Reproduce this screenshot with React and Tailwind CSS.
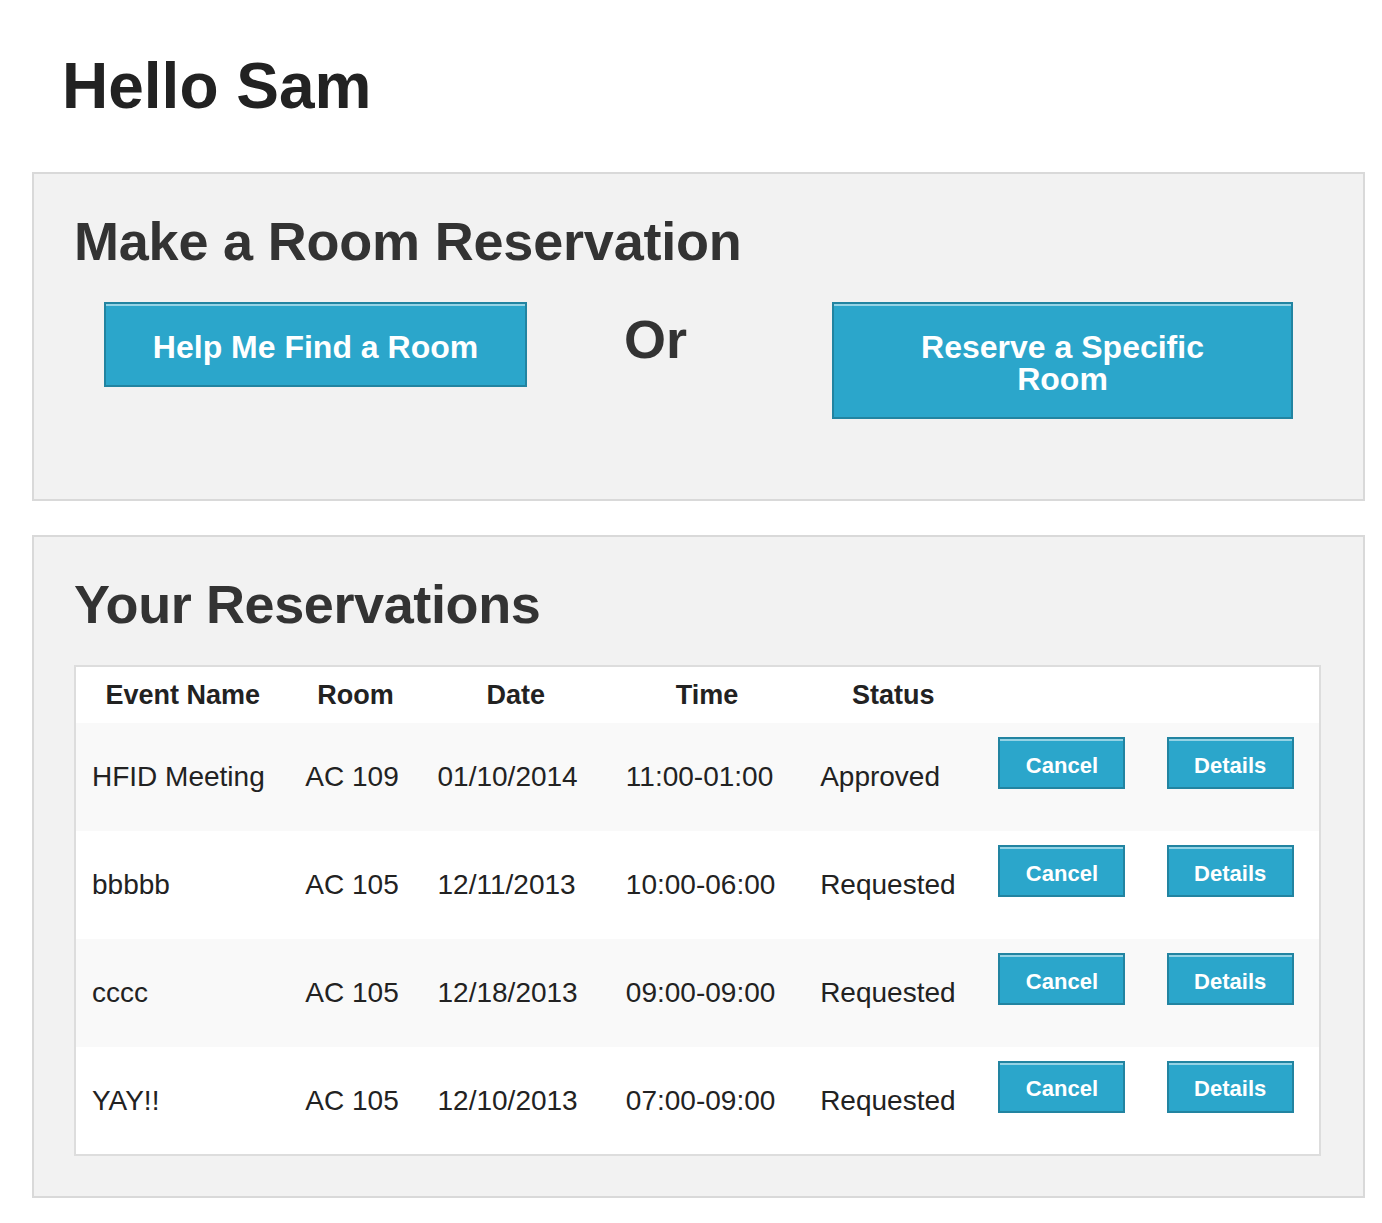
import React from "react";

const rows = [
  { name: "HFID Meeting", room: "AC 109", date: "01/10/2014", time: "11:00-01:00", status: "Approved" },
  { name: "bbbbb", room: "AC 105", date: "12/11/2013", time: "10:00-06:00", status: "Requested" },
  { name: "cccc", room: "AC 105", date: "12/18/2013", time: "09:00-09:00", status: "Requested" },
  { name: "YAY!!", room: "AC 105", date: "12/10/2013", time: "07:00-09:00", status: "Requested" },
];

function SmallButton({ children }) {
  return (
    <button className="flex items-center justify-center w-[127px] h-[52px] mb-[28px] pt-[5px] bg-[#2ba6cb] border-2 border-[#2284a1] shadow-[inset_0_2px_0_rgba(255,255,255,0.5)] text-white font-bold text-[22px] leading-[22px]">
      {children}
    </button>
  );
}

export default function App() {
  return (
    <div className="bg-white min-h-[1223px] text-[#222222] font-['Liberation_Sans',Arial,sans-serif]">
      <h1 className="pt-[54px] pl-[62px] text-[64px] leading-[64px] font-bold text-[#222222]">Hello Sam</h1>

      <div className="mt-[54px] ml-[32px] w-[1333px] bg-[#f2f2f2] border-2 border-[#d9d9d9] px-[40px] pt-[40px] pb-[40px]">
        <h2 className="text-[54px] leading-[54px] font-bold text-[#333333] tracking-[-0.2px]">Make a Room Reservation</h2>
        <div className="mt-[34px] flex items-start">
          <button className="ml-[30px] flex items-center justify-center w-[423px] h-[85px] pt-[4px] mb-[40px] bg-[#2ba6cb] border-2 border-[#2284a1] shadow-[inset_0_2px_0_rgba(255,255,255,0.5)] text-white font-bold text-[32px] leading-[32px]">
            Help Me Find a Room
          </button>
          <div className="ml-[97px] mt-[10px] text-[54px] leading-[54px] font-bold text-[#333333]">Or</div>
          <button className="ml-[145px] flex flex-col items-center justify-center w-[461px] h-[117px] pt-[4px] mb-[40px] bg-[#2ba6cb] border-2 border-[#2284a1] shadow-[inset_0_2px_0_rgba(255,255,255,0.5)] text-white font-bold text-[32px] leading-[32px] text-center">
            <span className="block">Reserve a Specific</span>
            <span className="block">Room</span>
          </button>
        </div>
      </div>

      <div className="mt-[34px] ml-[32px] w-[1333px] bg-[#f2f2f2] border-2 border-[#d9d9d9] px-[40px] pt-[40px] pb-[40px]">
        <h2 className="text-[54px] leading-[54px] font-bold text-[#333333] tracking-[-0.4px]">Your Reservations</h2>
        <table className="mt-[34px] w-[1247px] table-fixed border-collapse border-2 border-[#dddddd] bg-white">
          <colgroup>
            <col className="w-[214px]" />
            <col className="w-[132px]" />
            <col className="w-[188px]" />
            <col className="w-[194px]" />
            <col className="w-[178px]" />
            <col className="w-[168px]" />
            <col className="w-[169px]" />
          </colgroup>
          <thead>
            <tr className="h-[56px] bg-white">
              {["Event Name", "Room", "Date", "Time", "Status", "", ""].map((h, i) => (
                <th key={i} className="px-[16px] text-center align-middle text-[27px] leading-[56px] font-bold text-[#222222] whitespace-nowrap">
                  {h}
                </th>
              ))}
            </tr>
          </thead>
          <tbody>
            {rows.map((r, i) => (
              <tr key={i} className={`h-[108px] ${i % 2 === 0 ? "bg-[#f9f9f9]" : "bg-white"}`}>
                <td className="pl-[16px] pr-0 align-middle text-[28px] leading-[28px] text-[#222222] whitespace-nowrap">{r.name}</td>
                <td className="pl-[16px] pr-0 align-middle text-[28px] leading-[28px] text-[#222222] whitespace-nowrap">{r.room}</td>
                <td className="pl-[16px] pr-0 align-middle text-[28px] leading-[28px] text-[#222222] whitespace-nowrap">{r.date}</td>
                <td className="pl-[16px] pr-0 align-middle text-[28px] leading-[28px] text-[#222222] whitespace-nowrap">{r.time}</td>
                <td className="pl-[16px] pr-0 align-middle text-[28px] leading-[28px] text-[#222222] whitespace-nowrap">{r.status}</td>
                <td className="pl-[16px] pr-0 align-middle">
                  <SmallButton>Cancel</SmallButton>
                </td>
                <td className="pl-[16px] pr-0 align-middle">
                  <SmallButton>Details</SmallButton>
                </td>
              </tr>
            ))}
          </tbody>
        </table>
      </div>
    </div>
  );
}
